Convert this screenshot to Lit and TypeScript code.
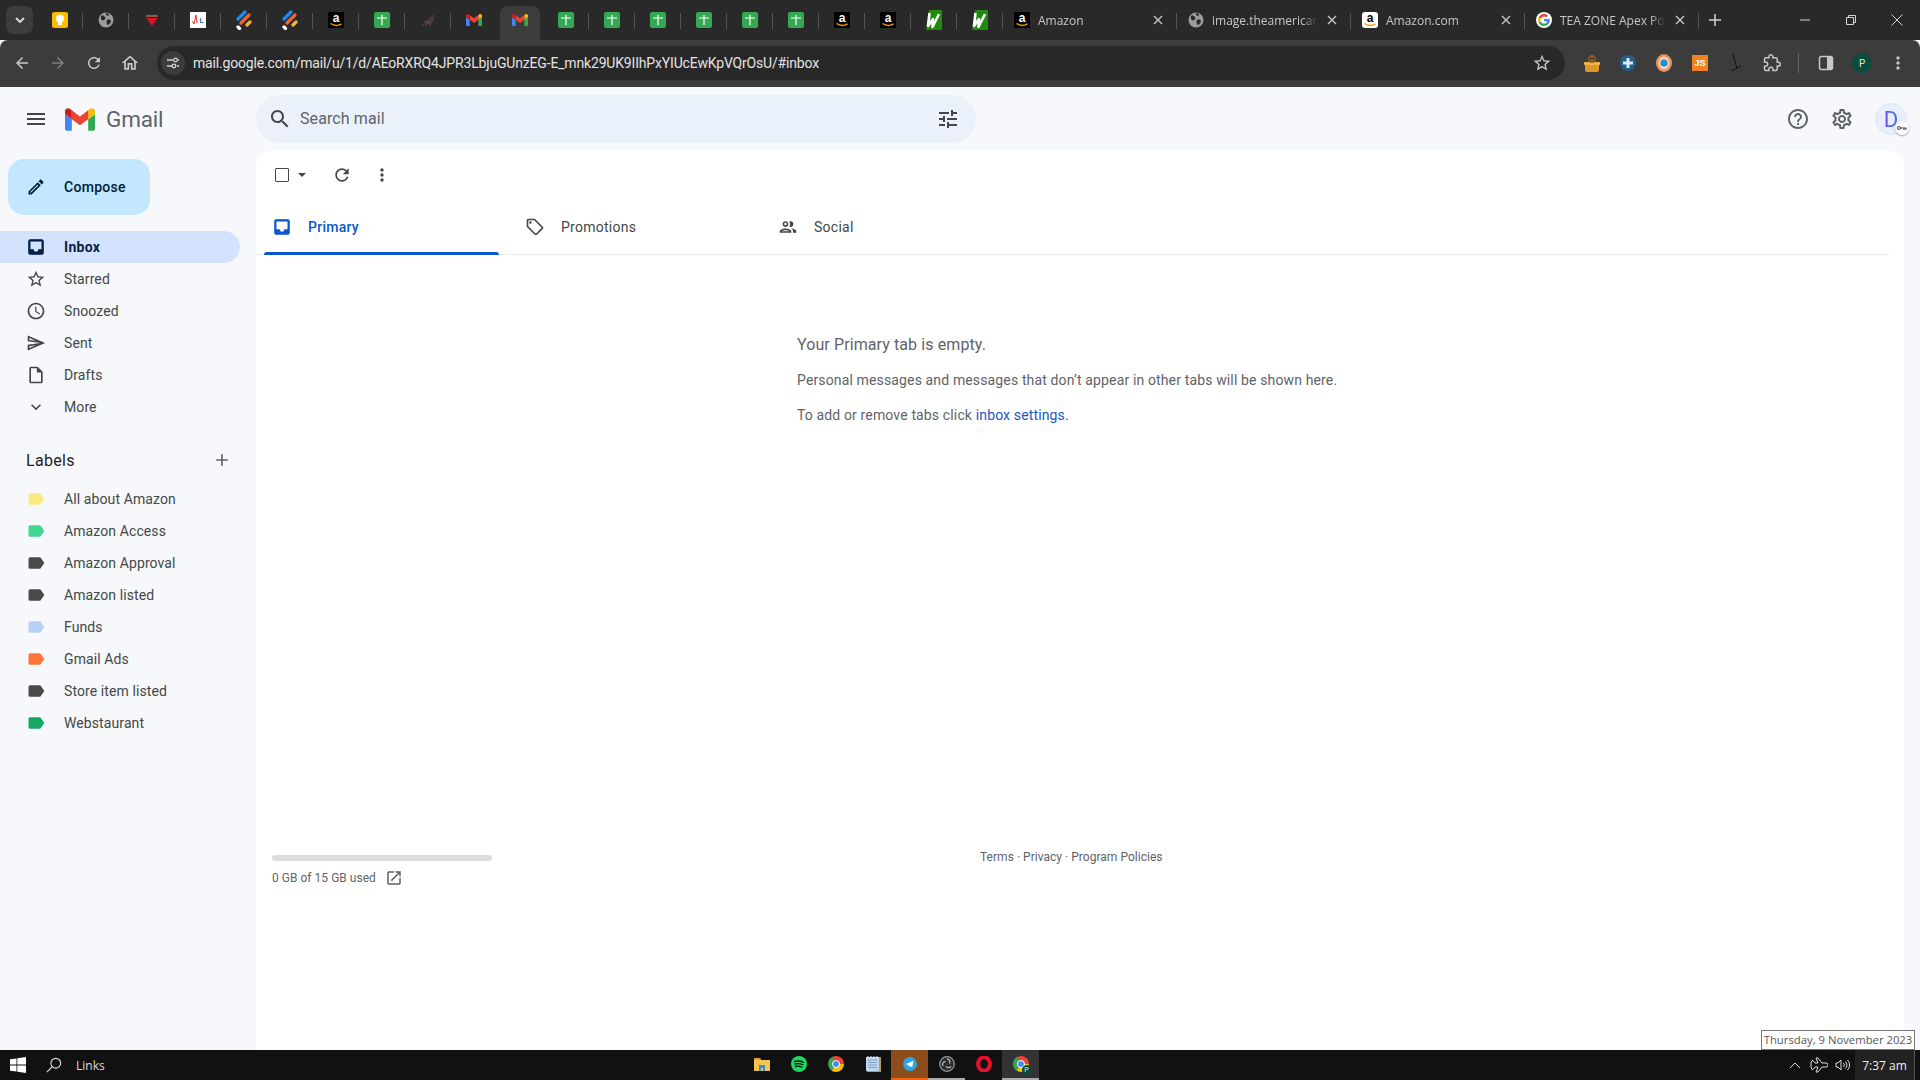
import { LitElement, html, css, TemplateResult } from 'lit';
import { customElement } from 'lit/decorators.js';
import { classMap } from 'lit/directives/class-map.js';

// material icon paths, 24 viewbox
const P = {
  menu: 'M3 18h18v-2H3v2zm0-5h18v-2H3v2zm0-7v2h18V6H3z',
  search: 'M15.5 14h-.79l-.28-.27C15.41 12.59 16 11.11 16 9.5 16 5.91 13.09 3 9.5 3S3 5.91 3 9.5 5.91 16 9.5 16c1.61 0 3.09-.59 4.23-1.57l.27.28v.79l5 4.99L20.49 19l-4.99-5zm-6 0C7.01 14 5 11.99 5 9.5S7.01 5 9.5 5 14 7.01 14 9.5 11.99 14 9.5 14z',
  tune: 'M3 17v2h6v-2H3zM3 5v2h10V5H3zm10 16v-2h8v-2h-8v-2h-2v6h2zM7 9v2H3v2h4v2h2V9H7zm14 4v-2H11v2h10zm-6-4h2V7h4V5h-4V3h-2v6z',
  help: 'M11 18h2v-2h-2v2zm1-16C6.48 2 2 6.48 2 12s4.48 10 10 10 10-4.48 10-10S17.52 2 12 2zm0 18c-4.41 0-8-3.59-8-8s3.59-8 8-8 8 3.59 8 8-3.59 8-8 8zm0-14c-2.21 0-4 1.79-4 4h2c0-1.1.9-2 2-2s2 .9 2 2c0 2-3 1.75-3 5h2c0-2.25 3-2.5 3-5 0-2.21-1.79-4-4-4z',
  settings: 'M19.43 12.98c.04-.32.07-.64.07-.98 0-.34-.03-.66-.07-.98l2.11-1.65c.19-.15.24-.42.12-.64l-2-3.46c-.09-.16-.26-.25-.44-.25-.06 0-.12.01-.17.03l-2.49 1c-.52-.4-1.08-.73-1.69-.98l-.38-2.65C14.46 2.18 14.25 2 14 2h-4c-.25 0-.46.18-.49.42l-.38 2.65c-.61.25-1.17.59-1.69.98l-2.49-1c-.06-.02-.12-.03-.18-.03-.17 0-.34.09-.43.25l-2 3.46c-.13.22-.07.49.12.64l2.11 1.65c-.04.32-.07.65-.07.98 0 .33.03.66.07.98l-2.11 1.65c-.19.15-.24.42-.12.64l2 3.46c.09.16.26.25.44.25.06 0 .12-.01.17-.03l2.49-1c.52.4 1.08.73 1.69.98l.38 2.65c.03.24.24.42.49.42h4c.25 0 .46-.18.49-.42l.38-2.65c.61-.25 1.17-.59 1.69-.98l2.49 1c.06.02.12.03.18.03.17 0 .34-.09.43-.25l2-3.46c.12-.22.07-.49-.12-.64l-2.11-1.65zm-1.98-1.71c.04.31.05.52.05.73 0 .21-.02.43-.05.73l-.14 1.13.89.7 1.08.84-.7 1.21-1.27-.51-1.04-.42-.9.68c-.43.32-.84.56-1.25.73l-1.06.43-.16 1.13-.2 1.35h-1.4l-.19-1.35-.16-1.13-1.06-.43c-.43-.18-.83-.41-1.23-.71l-.91-.7-1.06.43-1.27.51-.7-1.21 1.08-.84.89-.7-.14-1.13c-.03-.31-.05-.54-.05-.74s.02-.43.05-.73l.14-1.13-.89-.7-1.08-.84.7-1.21 1.27.51 1.04.42.9-.68c.43-.32.84-.56 1.25-.73l1.06-.43.16-1.13.2-1.35h1.39l.19 1.35.16 1.13 1.06.43c.43.18.83.41 1.23.71l.91.7 1.06-.43 1.27-.51.7 1.21-1.07.85-.89.7.14 1.13zM12 8c-2.21 0-4 1.79-4 4s1.79 4 4 4 4-1.79 4-4-1.79-4-4-4zm0 6c-1.1 0-2-.9-2-2s.9-2 2-2 2 .9 2 2-.9 2-2 2z',
  refresh: 'M17.65 6.35C16.2 4.9 14.21 4 12 4c-4.42 0-7.99 3.58-7.99 8s3.57 8 7.99 8c3.73 0 6.84-2.55 7.73-6h-2.08c-.82 2.33-3.04 4-5.65 4-3.31 0-6-2.69-6-6s2.69-6 6-6c1.66 0 3.14.69 4.22 1.78L13 11h7V4l-2.35 2.35z',
  dots: 'M12 8c1.1 0 2-.9 2-2s-.9-2-2-2-2 .9-2 2 .9 2 2 2zm0 2c-1.1 0-2 .9-2 2s.9 2 2 2 2-.9 2-2-.9-2-2-2zm0 6c-1.1 0-2 .9-2 2s.9 2 2 2 2-.9 2-2-.9-2-2-2z',
  inbox: 'M19 3H4.99C3.88 3 3 3.9 3 5v14c0 1.1.88 2 1.99 2H19c1.1 0 2-.9 2-2V5c0-1.1-.9-2-2-2zm0 12h-4c0 1.66-1.35 3-3 3s-3-1.34-3-3H4.99V5H19v10z',
  star: 'M22 9.24l-7.19-.62L12 2 9.19 8.63 2 9.24l5.46 4.73L5.82 21 12 17.27 18.18 21l-1.63-7.03L22 9.24zM12 15.4l-3.76 2.27 1-4.28-3.32-2.88 4.38-.38L12 6.1l1.71 4.04 4.38.38-3.32 2.88 1 4.28L12 15.4z',
  clock: 'M11.99 2C6.47 2 2 6.48 2 12s4.47 10 9.99 10C17.52 22 22 17.52 22 12S17.52 2 11.99 2zM12 20c-4.42 0-8-3.58-8-8s3.58-8 8-8 8 3.58 8 8-3.58 8-8 8zm.5-13H11v6l5.25 3.15.75-1.23-4.5-2.67z',
  send: 'M4.01 6.03l7.51 3.22-7.52-1 .01-2.22m7.5 8.72L4 17.97v-2.22l7.51-1M2.01 3L2 10l15 2-15 2 .01 7L23 12 2.01 3z',
  draft: 'M14 2H6c-1.1 0-1.99.9-1.99 2L4 20c0 1.1.89 2 1.99 2H18c1.1 0 2-.9 2-2V8l-6-6zM6 20V4h7v5h5v11H6z',
  more: 'M16.59 8.59L12 13.17 7.41 8.59 6 10l6 6 6-6z',
  add: 'M19 13h-6v6h-2v-6H5v-2h6V5h2v6h6v2z',
  label: 'M17.63 5.84C17.27 5.33 16.67 5 16 5L5 5.01C3.9 5.01 3 5.9 3 7v10c0 1.1.9 1.99 2 1.99L16 19c.67 0 1.27-.33 1.63-.84L22 12l-4.37-6.16z',
  pencil: 'M3 17.25V21h3.75L17.81 9.94l-3.75-3.75L3 17.25zM5.92 19H5v-.92l9.06-9.06.92.92L5.92 19zM20.71 5.63l-2.34-2.34c-.2-.2-.45-.29-.71-.29s-.51.1-.7.29l-1.83 1.83 3.75 3.75 1.83-1.83c.39-.39.39-1.02 0-1.41z',
  tag: 'M21.41 11.58l-9-9C12.05 2.22 11.55 2 11 2H4c-1.1 0-2 .9-2 2v7c0 .55.22 1.05.59 1.42l9 9c.36.36.86.58 1.41.58s1.05-.22 1.41-.59l7-7c.37-.36.59-.86.59-1.41s-.23-1.06-.59-1.42zM13 20.01L4 11V4h7v-.01l9 9-7 7.02zM6.5 5a1.5 1.5 0 1 0 0 3 1.5 1.5 0 0 0 0-3z',
  people: 'M9 13.75c-2.34 0-7 1.17-7 3.5V19h14v-1.75c0-2.33-4.66-3.5-7-3.5zM4.34 17c.84-.58 2.87-1.25 4.66-1.25s3.82.67 4.66 1.25H4.34zM9 12c1.93 0 3.5-1.57 3.5-3.5S10.93 5 9 5 5.5 6.57 5.5 8.5 7.07 12 9 12zm0-5c.83 0 1.5.67 1.5 1.5S9.83 10 9 10s-1.5-.67-1.5-1.5S8.17 7 9 7zm7.04 6.81c1.16.84 1.96 1.96 1.96 3.44V19h4v-1.75c0-2.02-3.5-3.17-5.96-3.44zM15 12c1.93 0 3.5-1.57 3.5-3.5S16.93 5 15 5c-.54 0-1.04.13-1.5.35.63.89 1 1.98 1 3.15s-.37 2.26-1 3.15c.46.22.96.35 1.5.35z',
  open: 'M19 19H5V5h7V3H5c-1.11 0-2 .9-2 2v14c0 1.1.89 2 2 2h14c1.1 0 2-.9 2-2v-7h-2v7zM14 3v2h3.59l-9.83 9.83 1.41 1.41L19 6.41V10h2V3h-7z',
  back: 'M20 11H7.83l5.59-5.59L12 4l-8 8 8 8 1.41-1.41L7.83 13H20v-2z',
  forward: 'M12 4l-1.41 1.41L16.17 11H4v2h12.17l-5.58 5.59L12 20l8-8z',
  home: 'M12 5.69l5 4.5V18h-2v-6H9v6H7v-7.81l5-4.5M12 3L2 12h3v8h6v-6h2v6h6v-8h3L12 3z',
};

const icon = (d: string, size = 20) =>
  html`<svg class="ic" width=${size} height=${size} viewBox="0 0 24 24" fill="currentColor"><path d=${d}></path></svg>`;

const gmailLogo = (w: number, h: number) => html`<svg width=${w} height=${h} viewBox="52 42 88 66">
  <path fill="#4285f4" d="M58 108h14V74L52 59v43c0 3.32 2.69 6 6 6"></path>
  <path fill="#34a853" d="M120 108h14c3.32 0 6-2.69 6-6V59l-20 15"></path>
  <path fill="#fbbc04" d="M120 48v26l20-15v-8c0-7.42-8.47-11.65-14.4-7.2"></path>
  <path fill="#ea4335" d="M72 74V48l24 18 24-18v26L96 92"></path>
  <path fill="#c5221f" d="M52 51v8l20 15V48l-5.6-4.2c-5.94-4.45-14.4-.22-14.4 7.2"></path>
</svg>`;

const amazon = (white = false) => html`<svg width="16" height="16" viewBox="0 0 16 16">
  <rect width="16" height="16" rx=${white ? 3 : 0} fill=${white ? '#fff' : '#000'}></rect>
  <text x="8" y="10" text-anchor="middle" font-family="Liberation Sans" font-weight="700" font-size="12" fill=${white ? '#000' : '#fff'}>a</text>
  <path d="M2.5 11.5c3.5 2.4 7.5 2.4 11 .3" fill="none" stroke="#f90" stroke-width="1.5"></path>
</svg>`;

const sheet = () => html`<svg width="16" height="16" viewBox="0 0 16 16">
  <rect width="16" height="16" rx="2" fill="#34a853"></rect>
  <path d="M3 5.4h10v1.2H3zM7.4 3h1.2v10H7.400z" fill="#fff"></path>
</svg>`;

const globe = () => html`<svg width="16" height="16" viewBox="0 0 16 16">
  <circle cx="8" cy="8" r="7.5" fill="#9a9a9a"></circle>
  <path d="M3 4c2-1 3 0 4 1s0 2-1 3-2 0-3-1zM9 8c2-1 4 0 4 1s-2 4-3 4-2-4-1-5zM8 1c2 0 3 1 3 2s-2 1-3 0z" fill="#292929"></path>
</svg>`;

const favicons: Record<string, () => TemplateResult> = {
  keep: () => html`<svg width="16" height="16" viewBox="0 0 16 16">
    <rect width="16" height="16" rx="2" fill="#fbbc04"></rect>
    <circle cx="8" cy="6.5" r="4" fill="#fff"></circle><rect x="6" y="10" width="4" height="3" fill="#fff"></rect>
  </svg>`,
  globe,
  triangle: () => html`<svg width="16" height="16" viewBox="0 0 16 16">
    <path d="M0 3h16l-8 11z" fill="#d8132f"></path><path d="M0 3h16v3H2z" fill="#2b1a1e"></path>
    <path d="M2 4h12" stroke="#e8b04a" stroke-width="1"></path>
  </svg>`,
  wl: () => html`<svg width="16" height="16" viewBox="0 0 16 16">
    <rect width="16" height="16" fill="#fff"></rect>
    <path d="M2 9l2 3 2-9 1 8" fill="none" stroke="#d33" stroke-width="1"></path>
    <text x="9.5" y="11" font-family="Liberation Sans" font-weight="700" font-size="7" fill="#2a5db0">L</text>
  </svg>`,
  feather: () => html`<svg width="16" height="20" viewBox="0 0 16 20" fill="none" stroke-linecap="round" stroke-width="3.2">
    <path d="M2 9l7-7" stroke="#1e88f0"></path><path d="M5 13l8-8" stroke="#f4622a"></path>
    <path d="M11 15l3-3" stroke="#f9b233"></path><path d="M2 17l1.5 1.5" stroke="#fff"></path>
  </svg>`,
  amazon: () => amazon(),
  amazonWhite: () => amazon(true),
  sheet,
  chart: () => html`<svg width="16" height="16" viewBox="0 0 16 16" fill="none" stroke-width="1.2">
    <path d="M2 14l4-5 2 3 5-9" stroke="#6b3b44"></path><path d="M5 14l4-6 1 5 4-8" stroke="#4d4d4d"></path>
  </svg>`,
  gmail: () => gmailLogo(16, 12),
  w: () => html`<svg width="16" height="20" viewBox="0 0 16 20">
    <path d="M3 0h13v20H0z" fill="#1f8a0c"></path>
    <path d="M3.5 3L2 16l5-7-.5 8L13 4" fill="none" stroke="#fff" stroke-width="2.6" stroke-linejoin="round"></path>
  </svg>`,
  google: () => html`<svg width="16" height="16" viewBox="0 0 16 16"><circle cx="8" cy="8" r="8" fill="#fff"></circle>
    <svg x="2" y="2" width="12" height="12" viewBox="0 0 48 48">
      <path fill="#EA4335" d="M24 9.5c3.54 0 6.71 1.22 9.21 3.6l6.85-6.85C35.9 2.38 30.47 0 24 0 14.62 0 6.51 5.38 2.56 13.22l7.98 6.19C12.43 13.72 17.74 9.5 24 9.5z"></path>
      <path fill="#4285F4" d="M46.98 24.55c0-1.57-.15-3.09-.38-4.55H24v9.02h12.94c-.58 2.96-2.26 5.48-4.78 7.18l7.73 6c4.51-4.18 7.09-10.36 7.09-17.65z"></path>
      <path fill="#FBBC05" d="M10.53 28.59c-.48-1.45-.76-2.99-.76-4.59s.27-3.14.76-4.59l-7.98-6.19C.92 16.46 0 20.12 0 24c0 3.88.92 7.54 2.56 10.78l7.97-6.19z"></path>
      <path fill="#34A853" d="M24 48c6.48 0 11.93-2.13 16.01-5.81l-7.73-6c-2.15 1.45-4.92 2.3-8.28 2.3-6.26 0-11.57-4.22-13.47-9.91l-7.98 6.19C6.51 42.62 14.62 48 24 48z"></path>
    </svg></svg>`,
};

const pinned = ['keep', 'globe', 'triangle', 'wl', 'feather', 'feather', 'amazon', 'sheet', 'chart', 'gmail', 'gmail',
  'sheet', 'sheet', 'sheet', 'sheet', 'sheet', 'sheet', 'amazon', 'amazon', 'w', 'w'];

const wideTabs = [
  { icon: 'amazon', title: 'Amazon' },
  { icon: 'globe', title: 'image.theamerican' },
  { icon: 'amazonWhite', title: 'Amazon.com' },
  { icon: 'google', title: 'TEA ZONE Apex Po' },
];

const navItems = [
  { name: 'Inbox', d: P.inbox, active: true },
  { name: 'Starred', d: P.star },
  { name: 'Snoozed', d: P.clock },
  { name: 'Sent', d: P.send },
  { name: 'Drafts', d: P.draft },
  { name: 'More', d: P.more },
];

const labels = [
  { name: 'All about Amazon', color: '#fbe983' },
  { name: 'Amazon Access', color: '#42d692' },
  { name: 'Amazon Approval', color: '#4a4a4a' },
  { name: 'Amazon listed', color: '#4a4a4a' },
  { name: 'Funds', color: '#b9d0f5' },
  { name: 'Gmail Ads', color: '#ff7537' },
  { name: 'Store item listed', color: '#4a4a4a' },
  { name: 'Webstaurant', color: '#16a765' },
];

const chromeLogo = (badge = false) => html`<div class="chrome-logo">
  <span></span>
  ${badge ? html`<i>P</i>` : ''}
</div>`;

@customElement('browser-bar')
export class BrowserBar extends LitElement {
  static styles = css`
    :host { display: block; font-family: 'Open Sans', 'Noto Sans', sans-serif; color: #c7c7c7; }
    svg { display: block; flex: none; }
    .strip { display: flex; height: 40px; background: #292929; padding-left: 6px; box-sizing: border-box; }
    .chev { width: 27px; height: 28px; margin: 6px 4px 0 0; border-radius: 8px; background: #3c3c3c; display: flex; align-items: center; justify-content: center; color: #d5d5d5; }
    .tab { position: relative; height: 34px; margin-top: 6px; padding-bottom: 6px; box-sizing: border-box; display: flex; align-items: center; justify-content: center; width: 46px; flex: none; }
    .tab::after { content: ''; position: absolute; right: 0; top: 7px; width: 1px; height: 16px; background: #555; }
    .tab.nosep::after { display: none; }
    .tab.active { z-index: 1; }
    .tab.active::before { content: ''; position: absolute; left: 3px; right: 3px; top: 0; bottom: -1px; background: #3c3c3c; border-radius: 8px 8px 0 0; }
    .tab.active svg { position: relative; }
    .tab.wide { width: 174px; justify-content: flex-start; padding-left: 11px; padding-right: 11px; }
    .tab.wide .title { flex: 1; min-width: 0; margin-left: 8px; font-size: 12px; white-space: nowrap; overflow: hidden; -webkit-mask-image: linear-gradient(90deg, #000 85%, transparent); mask-image: linear-gradient(90deg, #000 85%, transparent); }
    .tab.wide .x { color: #c7c7c7; margin-left: 6px; }
    .plus { width: 32px; display: flex; align-items: center; justify-content: center; color: #d5d5d5; }
    .win { margin-left: auto; display: flex; }
    .win div { width: 46px; height: 40px; display: flex; align-items: center; justify-content: center; }
    .tools { display: flex; align-items: center; height: 47px; padding: 0 0 2px 4px; background: #3c3c3c; border-radius: 8px 8px 0 0; box-sizing: border-box; color: #c7c7c7; }
    .btn { width: 36px; height: 36px; display: flex; align-items: center; justify-content: center; flex: none; }
    .btn.dim { color: #7e7e7e; }
    .omni { margin-left: 9px; width: 1408px; height: 34px; background: #282828; border-radius: 17px; display: flex; align-items: center; box-sizing: border-box; padding: 0 13px 0 4px; }
    .site { width: 24px; height: 24px; border-radius: 50%; background: #3c3c3c; display: flex; align-items: center; justify-content: center; }
    .url { margin-left: 8px; flex: 1; font: 400 14px Roboto, sans-serif; letter-spacing: -.17px; color: #e3e3e3; }
    .ext { display: flex; align-items: center; margin-left: 9px; flex: 1; }
    .ext .cell { width: 36px; height: 36px; display: flex; align-items: center; justify-content: center; flex: none; }
    .vsep { width: 1px; height: 20px; background: #666; margin: 0 9px 0 8px; flex: none; }
    .avatar { width: 20px; height: 20px; border-radius: 50%; background: #0b4b3f; color: #d8e8e2; font-size: 11px; display: flex; align-items: center; justify-content: center; }
    .js { width: 16px; height: 16px; background: #f48120; color: #fff; font: 700 9px/16px 'Liberation Sans', sans-serif; text-align: center; }
  `;

  render() {
    const x = html`<svg width="16" height="16" viewBox="0 0 16 16" fill="none" stroke="currentColor" stroke-width="1.4"><path d="M4 4l8 8M12 4l-8 8"></path></svg>`;
    return html`
      <div class="strip">
        <div class="chev"><svg width="10" height="6" viewBox="0 0 10 6" fill="none" stroke="currentColor" stroke-width="2"><path d="M1 1l4 4 4-4"></path></svg></div>
        ${pinned.map((k, i) => html`<div class=${classMap({ tab: true, active: i === 10, nosep: i === 9 || i === 10 })}>${favicons[k]()}</div>`)}
        ${wideTabs.map(t => html`<div class="tab wide">${favicons[t.icon]()}<span class="title">${t.title}</span><span class="x">${x}</span></div>`)}
        <div class="plus"><svg width="14" height="14" viewBox="0 0 14 14" fill="none" stroke="currentColor" stroke-width="1.5"><path d="M7 1v12M1 7h12"></path></svg></div>
        <div class="win">
          <div><svg width="12" height="12" viewBox="0 0 12 12" stroke="#d5d5d5"><path d="M1 6h10"></path></svg></div>
          <div><svg width="12" height="12" viewBox="0 0 12 12" fill="none" stroke="#d5d5d5"><path d="M1.5 3.5h7v7h-7zM3.5 3.5v-2h7v7h-2"></path></svg></div>
          <div><svg width="12" height="12" viewBox="0 0 12 12" stroke="#d5d5d5"><path d="M.5.5l11 11M11.5.5l-11 11"></path></svg></div>
        </div>
      </div>
      <div class="tools">
        <div class="btn">${icon(P.back, 18)}</div>
        <div class="btn dim">${icon(P.forward, 18)}</div>
        <div class="btn">${icon(P.refresh, 18)}</div>
        <div class="btn">${icon(P.home, 20)}</div>
        <div class="omni">
          <div class="site"><svg width="14" height="14" viewBox="0 0 14 14" fill="none" stroke="#d5d5d5" stroke-width="1.3"><path d="M1 4h6M11 10h2M1 10h5M12 4h1"></path><circle cx="9.5" cy="4" r="1.8"></circle><circle cx="8" cy="10" r="1.8"></circle></svg></div>
          <div class="url">mail.google.com/mail/u/1/d/AEoRXRQ4JPR3LbjuGUnzEG-E_mnk29UK9IIhPxYIUcEwKpVQrOsU/#inbox</div>
          ${icon(P.star, 20)}
        </div>
        <div class="ext">
          <div class="cell"><svg width="16" height="18" viewBox="0 0 16 18"><path d="M1 8h14v8a2 2 0 0 1-2 2H3a2 2 0 0 1-2-2z" fill="#d99a2b"></path><rect x="0" y="8" width="16" height="3" rx="1" fill="#efb63f"></rect><circle cx="8" cy="5" r="4" fill="#8a5a2b"></circle><circle cx="6.5" cy="4.5" r=".7"></circle><circle cx="9.5" cy="4.5" r=".7"></circle></svg></div>
          <div class="cell"><svg width="16" height="16" viewBox="0 0 16 16"><circle cx="8" cy="8" r="8" fill="#1f5f8b"></circle><path d="M6.5 3h3v3.5H13v3H9.5V13h-3V9.5H3v-3h3.500z" fill="#dbe9f2"></path></svg></div>
          <div class="cell"><svg width="16" height="18" viewBox="0 0 16 18"><ellipse cx="8" cy="9" rx="8" ry="9" fill="#e8935c"></ellipse><ellipse cx="8" cy="9" rx="5.5" ry="6.5" fill="#f5cfb0"></ellipse><circle cx="8" cy="9" r="3.5" fill="#1a8fd8"></circle></svg></div>
          <div class="cell"><div class="js">JS</div></div>
          <div class="cell"><svg width="12" height="20" viewBox="0 0 12 20" fill="none" stroke="#111" stroke-width="1"><path d="M3 1l4 15M1 18l10-5"></path></svg></div>
          <div class="cell"><svg width="18" height="18" viewBox="0 0 24 24" fill="none" stroke="#c7c7c7" stroke-width="2"><path d="M20.5 11H19V7c0-1.1-.9-2-2-2h-4V3.5a2.5 2.5 0 0 0-5 0V5H4c-1.1 0-2 .9-2 2v3.800h1.5a2.700 2.700 0 0 1 0 5.400H2V20c0 1.100.9 2 2 2h3.800v-1.500a2.700 2.700 0 0 1 5.400 0V22H17c1.100 0 2-.9 2-2v-4h1.500a2.500 2.500 0 0 0 0-5z"></path></svg></div>
          <div class="vsep"></div>
          <div class="cell"><svg width="16" height="16" viewBox="0 0 16 16"><rect x="1.5" y="1.5" width="13" height="13" rx="2" fill="none" stroke="#c7c7c7" stroke-width="1.5"></rect><rect x="9" y="2" width="5" height="12" fill="#c7c7c7"></rect></svg></div>
          <div class="cell"><div class="avatar">P</div></div>
          <div class="cell">${icon(P.dots, 20)}</div>
        </div>
      </div>
    `;
  }
}

@customElement('gmail-side')
export class GmailSide extends LitElement {
  static styles = css`
    :host { display: block; width: 256px; flex: none; font-family: Roboto, sans-serif; font-size: 14px; letter-spacing: .1px; color: #444746; }
    .ic { display: block; flex: none; }
    .brand { height: 64px; display: flex; align-items: center; padding-left: 24px; box-sizing: border-box; }
    .brand .burger { color: #444746; margin-right: 17px; }
    .brand .word { margin-left: 11px; font-size: 22.5px; color: #5f6368; letter-spacing: -.2px; }
    .compose { margin: 8px 0 16px 8px; width: 142px; height: 56px; border-radius: 16px; background: #c2e7ff; display: flex; align-items: center; padding-left: 18px; box-sizing: border-box; color: #001d35; font-weight: 500; letter-spacing: .3px; }
    .compose span { margin-left: 18px; }
    .row { height: 32px; width: 240px; border-radius: 0 16px 16px 0; display: flex; align-items: center; padding-left: 26px; box-sizing: border-box; }
    .row span { margin-left: 18px; }
    .row.active { background: #d3e3fd; color: #0b1f44; font-weight: 700; letter-spacing: .3px; }
    .row.active svg { color: #041e49; stroke: currentColor; stroke-width: .7; }
    .labels-h { margin: 21px 0 7px; height: 32px; width: 240px; padding: 0 8px 0 26px; box-sizing: border-box; display: flex; align-items: center; justify-content: space-between; font-size: 16px; letter-spacing: .3px; color: #1f1f1f; }
    .labels-h svg { color: #5f6368; }
  `;

  render() {
    return html`
      <div class="brand">
        <span class="burger">${icon(P.menu, 24)}</span>
        ${gmailLogo(30, 23)}
        <span class="word">Gmail</span>
      </div>
      <div class="compose">${icon(P.pencil, 20)}<span>Compose</span></div>
      ${navItems.map(n => html`<div class=${classMap({ row: true, active: !!n.active })}>${icon(n.d, 20)}<span>${n.name}</span></div>`)}
      <div class="labels-h">Labels ${icon(P.add, 20)}</div>
      ${labels.map(l => html`<div class="row"><svg class="ic" width="20" height="20" viewBox="0 0 24 24" fill=${l.color}><path d=${P.label}></path></svg><span>${l.name}</span></div>`)}
    `;
  }
}

@customElement('gmail-main')
export class GmailMain extends LitElement {
  static styles = css`
    :host { display: flex; flex-direction: column; flex: 1; min-width: 0; font-family: Roboto, sans-serif; font-size: 14px; color: #5f6368; }
    .ic { display: block; flex: none; }
    .top { height: 64px; display: flex; align-items: center; flex: none; }
    .search { width: 720px; height: 48px; border-radius: 24px; background: #eaf1fb; display: flex; align-items: center; padding: 0 16px 0 12px; box-sizing: border-box; color: #444746; }
    .search .ph { margin: 0 0 2px 8px; flex: 1; font-size: 16px; letter-spacing: .1px; color: #5f6368; }
    .actions { margin-left: auto; display: flex; align-items: center; padding-right: 13px; color: #5f6368; }
    .actions .gap { margin-left: 20px; }
    .acct { position: relative; width: 32px; height: 32px; border-radius: 50%; background: #e8eefb; border: 1px solid #dfe5f0; box-sizing: border-box; margin-left: 21px; display: flex; align-items: center; justify-content: center; font-size: 22px; }
    .acct b { font-weight: 400; background: linear-gradient(90deg, #7a4df0, #3f6ef0 60%); -webkit-background-clip: text; background-clip: text; color: transparent; }
    .key { position: absolute; right: -3px; bottom: -1px; width: 14px; height: 14px; border-radius: 50%; background: #fff; box-shadow: 0 1px 2px rgba(0,0,0,.35); display: flex; align-items: center; justify-content: center; }
    .card { flex: 1; margin-right: 16px; background: #fff; border-radius: 16px 16px 0 0; display: flex; flex-direction: column; }
    .bar { height: 48px; display: flex; align-items: center; padding-left: 19px; color: #444746; flex: none; }
    .check { width: 14px; height: 14px; border: 1.5px solid #444746; border-radius: 1px; box-sizing: border-box; }
    .caret { width: 0; height: 0; margin-left: 9px; border: 4px solid transparent; border-top: 4px solid #444746; border-bottom: 0; }
    .bar .reload { margin-left: 26px; }
    .bar .overflow { margin-left: 20px; }
    .tabs { display: flex; height: 56px; box-sizing: border-box; border-bottom: 1px solid #e8ebef; margin-right: 15px; flex: none; }
    .tab { width: 253px; margin-bottom: -1px; display: flex; flex-direction: column; color: #444746; letter-spacing: .25px; }
    .tab .in { flex: 1; display: flex; align-items: center; padding: 3px 0 0 16px; }
    .tab .in span { margin-left: 16px; }
    .tab .line { height: 3px; margin: 0 10px 0 8px; }
    .tab.on { color: #0b57d0; font-weight: 500; }
    .tab.on svg { stroke: currentColor; stroke-width: .7; }
    .tab.on .line { background: #0b57d0; border-radius: 3px 3px 0 0; }
    .empty { margin: 80px 0 0 541px; flex: none; letter-spacing: .14px; }
    .empty p { margin: 0 0 15px; line-height: 20px; white-space: nowrap; }
    .empty .head { font-size: 16px; letter-spacing: .1px; }
    .empty a { color: #1a56c9; text-decoration: none; }
    .foot { margin-top: 415px; padding-left: 16px; display: flex; font-size: 12px; flex: none; }
    .left { width: 708px; flex: none; }
    .meter { width: 220px; height: 6px; border-radius: 3px; background: #dadce0; }
    .used { display: flex; align-items: center; gap: 9px; margin-top: 8px; height: 18px; letter-spacing: .03px; }
    .terms { line-height: 14px; margin-top: -5px; letter-spacing: .03px; }
  `;

  render() {
    const tabs = [
      { name: 'Primary', d: P.inbox, on: true },
      { name: 'Promotions', d: P.tag },
      { name: 'Social', d: P.people },
    ];
    return html`
      <div class="top">
        <div class="search">
          ${icon(P.search, 24)}
          <span class="ph">Search mail</span>
          ${icon(P.tune, 24)}
        </div>
        <div class="actions">
          ${icon(P.help, 24)}
          <span class="gap">${icon(P.settings, 24)}</span>
          <div class="acct"><b>D</b>
            <span class="key"><svg width="10" height="6" viewBox="0 0 10 6" fill="none" stroke="#444" stroke-width="1"><circle cx="2" cy="3" r="1.5"></circle><path d="M3.5 3h6M7 3v2M9 3v2"></path></svg></span>
          </div>
        </div>
      </div>
      <div class="card">
        <div class="bar">
          <div class="check"></div><div class="caret"></div>
          <span class="reload">${icon(P.refresh, 20)}</span>
          <span class="overflow">${icon(P.dots, 20)}</span>
        </div>
        <div class="tabs">
          ${tabs.map(t => html`<div class=${classMap({ tab: true, on: !!t.on })}>
            <div class="in">${icon(t.d, 20)}<span>${t.name}</span></div>
            <div class="line"></div>
          </div>`)}
        </div>
        <div class="empty">
          <p class="head">Your Primary tab is empty.</p>
          <p>Personal messages and messages that don’t appear in other tabs will be shown here.</p>
          <p>To add or remove tabs click <a>inbox settings.</a></p>
        </div>
        <div class="foot">
          <div class="left">
            <div class="meter"></div>
            <div class="used">0 GB of 15 GB used ${icon(P.open, 18)}</div>
          </div>
          <div class="terms">Terms · Privacy · Program Policies</div>
        </div>
      </div>
    `;
  }
}

@customElement('win-taskbar')
export class WinTaskbar extends LitElement {
  static styles = css`
    :host { display: flex; height: 30px; flex: none; background: #111; color: #ddd; font: 12px 'Open Sans', 'Noto Sans', sans-serif; align-items: stretch; position: relative; }
    svg { display: block; flex: none; }
    .left { width: 743px; flex: none; display: flex; align-items: center; padding-left: 10px; box-sizing: border-box; }
    .find { margin-left: 20px; }
    .links { margin-left: 14px; }
    .app { width: 37px; flex: none; display: flex; align-items: center; justify-content: center; box-sizing: border-box; border-bottom: 2px solid transparent; }
    .app.tg { background: #8c4d1c; border-bottom-color: #f7630c; }
    .app.run { border-bottom-color: #aaa; }
    .app.cur { background: #333; border-bottom-color: #aaa; }
    .tray { margin-left: auto; display: flex; align-items: center; }
    .tray .up { margin-right: 9px; }
    .tray .plane { margin-right: 7px; }
    .tray .vol { margin-right: 4px; }
    .clock { width: 60px; height: 30px; margin-right: 5px; background: #222; display: flex; align-items: center; justify-content: center; color: #eee; border-right: 1px solid #555; box-sizing: border-box; }
    .tip { position: absolute; right: 5px; bottom: 30px; height: 20px; width: 154px; box-sizing: border-box; background: #fff; border: 1px solid #767676; color: #575757; font: 11.3px/18px 'Open Sans', sans-serif; text-align: center; white-space: nowrap; }
    .chrome-logo { position: relative; width: 16px; height: 16px; border-radius: 50%; background: conic-gradient(#ea4335 0 90deg, #fbbc04 90deg 210deg, #34a853 210deg 330deg, #ea4335 330deg); display: flex; align-items: center; justify-content: center; }
    .chrome-logo span { width: 6px; height: 6px; border-radius: 50%; background: #4285f4; border: 1px solid #fff; }
    .chrome-logo i { position: absolute; right: -3px; bottom: -3px; width: 10px; height: 10px; border-radius: 50%; background: #0b4b3f; color: #d8e8e2; font: 7px/10px Roboto, sans-serif; text-align: center; }
  `;

  render() {
    return html`
      <div class="left">
        <svg width="16" height="16" viewBox="0 0 16 16" fill="#fff"><path d="M0 2.3l6.5-.9v6.200H0zM7.300 1.300L16 0v7.600H7.300zM0 8.400h6.500v6.200L0 13.700zM7.300 8.400H16V16l-8.700-1.200z"></path></svg>
        <span class="find"><svg width="16" height="16" viewBox="0 0 18 18" fill="none" stroke="#ddd" stroke-width="1.3"><circle cx="11" cy="7" r="5.5"></circle><path d="M7 11l-6 6"></path></svg></span>
        <span class="links">Links</span>
      </div>
      <div class="app"><svg width="16" height="14" viewBox="0 0 16 14"><path d="M0 1h6l1 2h9v11H0z" fill="#f4c44e"></path><path d="M0 1h6l1 2H0z" fill="#d9a12d"></path><path d="M5 8h6v6H9v-3H7v3H5z" fill="#2c8fd8"></path></svg></div>
      <div class="app"><svg width="16" height="16" viewBox="0 0 16 16"><circle cx="8" cy="8" r="8" fill="#1ed760"></circle><path d="M3.5 5.5c3-.8 6.200-.6 9 .8M4 8c2.600-.7 5.400-.5 7.800.8M4.500 10.500c2.200-.5 4.400-.4 6.400.7" fill="none" stroke="#111" stroke-width="1.3" stroke-linecap="round"></path></svg></div>
      <div class="app">${chromeLogo()}</div>
      <div class="app"><svg width="16" height="16" viewBox="0 0 16 16"><rect x="2" y="1" width="14" height="15" fill="#b89a68"></rect><rect x="1" y="1" width="13" height="14" fill="#bcd7ee"></rect><path d="M3 4h9M3 6.500h9M3 9h9M3 11.500h9" stroke="#6f95b8" stroke-width=".8"></path><path d="M3 0v2M6 0v2M9 0v2M12 0v2" stroke="#dfe8ee"></path></svg></div>
      <div class="app tg"><svg width="14" height="14" viewBox="0 0 14 14"><circle cx="7" cy="7" r="7" fill="#2ca5e0"></circle><path d="M2.800 7l7.700-3.200-1.300 6.700-2.400-1.700-1.200 1.200-.2-2z" fill="#fff"></path></svg></div>
      <div class="app run"><svg width="16" height="16" viewBox="0 0 16 16"><circle cx="8" cy="8" r="7.300" fill="#2d2d2d" stroke="#9a9a9a" stroke-width="1.2"></circle><path d="M8 3a3 3 0 0 1 2.500 4.500M12 10.500a3 3 0 0 1-5-.3M4 10a3 3 0 0 1 2.500-4.500" fill="none" stroke="#bbb" stroke-width="1.3"></path></svg></div>
      <div class="app"><svg width="16" height="16" viewBox="0 0 16 16"><ellipse cx="8" cy="8" rx="6" ry="6.700" fill="none" stroke="#e8112d" stroke-width="4"></ellipse></svg></div>
      <div class="app cur">${chromeLogo(true)}</div>
      <div class="tray">
        <svg class="up" width="12" height="8" viewBox="0 0 12 8" fill="none" stroke="#ddd"><path d="M1 7l5-5 5 5"></path></svg>
        <svg class="plane" width="18" height="16" viewBox="0 0 18 16" fill="none" stroke="#ddd"><path d="M1 6l1-2.500h1L5 6h3L6 1h2l4 5h4a2 2 0 0 1 0 4h-4l-4 5H6l2-5H5l-2 2.500H2L1 10z"></path></svg>
        <svg class="vol" width="16" height="16" viewBox="0 0 16 16" fill="none" stroke="#ddd"><path d="M1 6h2l3-3v10l-3-3H1zM8.500 6a3 3 0 0 1 0 4M10.500 4.500a5 5 0 0 1 0 7M12.500 3a7 7 0 0 1 0 10"></path></svg>
        <div class="clock">7:37 am</div>
      </div>
      <div class="tip">Thursday, 9 November 2023</div>
    `;
  }
}

@customElement('app-root')
export class AppRoot extends LitElement {
  static styles = css`
    :host { display: flex; flex-direction: column; width: 100vw; height: 100vh; overflow: hidden; background: #f6f8fc; }
    .body { flex: 1; min-height: 0; display: flex; }
  `;

  render() {
    return html`
      <browser-bar></browser-bar>
      <div class="body">
        <gmail-side></gmail-side>
        <gmail-main></gmail-main>
      </div>
      <win-taskbar></win-taskbar>
    `;
  }
}
